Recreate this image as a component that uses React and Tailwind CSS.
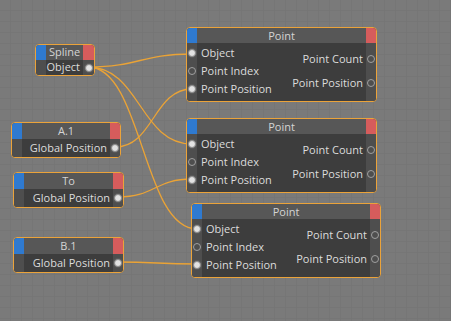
import React from "react";

const FONT = { fontFamily: '"Open Sans", "Noto Sans", sans-serif' };

function Port({ on }) {
  return on ? (
    <span className="block w-[8px] h-[8px] rounded-full bg-[#e2e2e2] border border-[#8c8c8c] shadow-[0_0_0_1px_#5a5a5a]" />
  ) : (
    <span className="block w-[8px] h-[8px] rounded-full border border-[#a0a0a0]" />
  );
}

function PointNode({ pos }) {
  return (
    <div
      className={`absolute ${pos} h-[75px] flex flex-col rounded-[4px] border border-[#eba33a] overflow-hidden bg-[#3d3d3d] text-[11px] text-[#dcdcdc]`}
    >
      <div className="flex h-[15px] shrink-0">
        <div className="w-[10px] bg-[#2f7ad0]" />
        <div className="flex-1 bg-[#575757] text-center leading-[15px] text-[#d4d4d4]">Point</div>
        <div className="w-[10px] bg-[#d65c5c]" />
      </div>
      <div className="flex flex-1">
        <div className="w-[10px] bg-[#4e4e4e] flex flex-col items-center pt-[1px]">
          <div className="h-[18px] flex items-center"><Port on /></div>
          <div className="h-[18px] flex items-center"><Port /></div>
          <div className="h-[18px] flex items-center"><Port on /></div>
        </div>
        <div className="flex-1 flex justify-between">
          <div className="flex flex-col pt-[1px] pl-[4px]">
            <div className="h-[18px] leading-[18px]">Object</div>
            <div className="h-[18px] leading-[18px]">Point Index</div>
            <div className="h-[18px] leading-[18px]">Point Position</div>
          </div>
          <div className="flex flex-col items-end pt-[7px] pr-[3px] gap-[6px]">
            <div className="h-[18px] leading-[18px]">Point Count</div>
            <div className="h-[18px] leading-[18px]">Point Position</div>
          </div>
        </div>
        <div className="w-[10px] bg-[#4e4e4e] flex flex-col items-center pt-[7px] gap-[6px]">
          <div className="h-[18px] flex items-center"><Port /></div>
          <div className="h-[18px] flex items-center"><Port /></div>
        </div>
      </div>
    </div>
  );
}

function SmallNode({ pos, title, label, hh = "h-[16px]", rh = "h-[18px]", red = "w-[10px]" }) {
  return (
    <div
      className={`absolute ${pos} flex flex-col rounded-[4px] border border-[#eba33a] overflow-hidden bg-[#3d3d3d] text-[11px] text-[#dcdcdc]`}
    >
      <div className={`flex ${hh} shrink-0`}>
        <div className="w-[10px] bg-[#2f7ad0]" />
        <div className="flex-1 bg-[#575757] flex items-center justify-center text-[#d4d4d4]">{title}</div>
        <div className={`${red} bg-[#d65c5c]`} />
      </div>
      <div className={`flex ${rh} shrink-0`}>
        <div className="w-[10px] bg-[#4e4e4e]" />
        <div className="flex-1 flex items-center justify-end pr-[3px] whitespace-nowrap">{label}</div>
        <div className={`${red} bg-[#4e4e4e] flex items-center justify-center`}>
          <Port on />
        </div>
      </div>
    </div>
  );
}

function wire(x1, y1, x2, y2) {
  const d = Math.max(30, Math.abs(x2 - x1) * 0.5);
  return `M${x1} ${y1} C${x1 + d} ${y1}, ${x2 - d} ${y2}, ${x2} ${y2}`;
}

const wires = [
  [88, 67, 192, 54],
  [88, 67, 192, 144],
  [88, 67, 197, 229],
  [115, 147, 192, 89],
  [118, 197, 192, 179],
  [117, 262, 197, 264],
];

export default function App() {
  return (
    <div className="relative w-[451px] h-[321px] overflow-hidden bg-[#7a7a7a]" style={FONT}>
      <svg className="absolute inset-0" width="451" height="321">
        <defs>
          <pattern id="g" width="11" height="11" patternUnits="userSpaceOnUse">
            <path d="M11 0 V11 M0 11 H11" stroke="#727272" strokeWidth="1" fill="none" />
          </pattern>
        </defs>
        <rect width="451" height="321" fill="url(#g)" />
        {wires.map((w, i) => (
          <path key={i} d={wire(...w)} stroke="#eaa336" strokeWidth="1.3" fill="none" />
        ))}
      </svg>

      <SmallNode pos="left-[35px] top-[44px] w-[60px]" title="Spline" label="Object" hh="h-[15px]" rh="h-[15px]" red="w-[11px]" />
      <SmallNode pos="left-[11px] top-[122px] w-[110px]" title="A.1" label="Global Position" />
      <SmallNode pos="left-[13px] top-[172px] w-[111px]" title="To" label="Global Position" />
      <SmallNode pos="left-[13px] top-[237px] w-[111px]" title="B.1" label="Global Position" />

      <PointNode pos="left-[186px] top-[27px] w-[191px]" />
      <PointNode pos="left-[186px] top-[118px] w-[191px]" />
      <PointNode pos="left-[191px] top-[203px] w-[190px]" />
    </div>
  );
}
